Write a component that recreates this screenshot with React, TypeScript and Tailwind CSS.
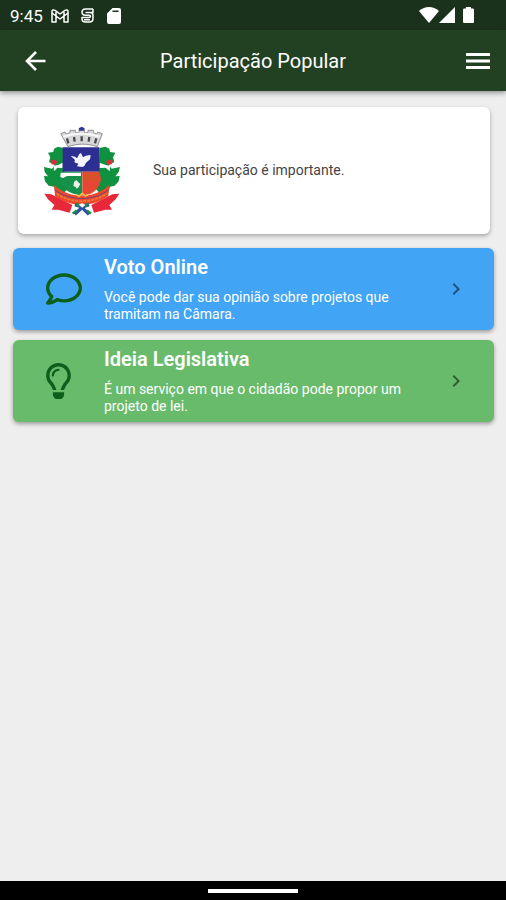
import type { ReactNode } from "react";
import { FaRegComment, FaRegLightbulb } from "react-icons/fa";
import { MdChevronRight } from "react-icons/md";

function StatusBar() {
  return (
    <div className="flex h-[30px] items-center justify-between bg-[#1a321b] pr-8 pl-[10px] text-white">
      <div className="flex items-center pt-px">
        <span className="w-[41px] text-[17px] leading-5 whitespace-nowrap">9:45</span>
        <svg className="h-[14px] w-[18px]" viewBox="0 0 18 14" fill="none" stroke="currentColor" strokeWidth="1.5" strokeLinejoin="round">
          <path d="M1 2.500C1 1 2.700.5 4 1.400L9 5l5-3.600c1.300-.9 3-.4 3 1.100V13h-4V7L9 10 5 7v6H1z" />
          <path d="M5 7V3M13 7V3M1 4l4 3M17 4l-4 3" />
        </svg>
        <svg className="ml-3 h-[15px] w-[13px]" viewBox="0 0 13 15" fill="none" stroke="currentColor" strokeWidth="1.500" strokeLinejoin="round">
          <path d="M12 1H4.500C2.200 1 1 2.200 1 4s1.200 3.200 3.500 3.200H8c1 0 1.500.4 1.500 1.100S9 9.500 8 9.500H1V11c0 2 1.500 3 3.500 3h4c2.300 0 3.500-1.500 3.500-3.500V7.200c0-1.900-1.200-2.600-3-2.600H4.500M12 1v3.600H9M3 11.800h6" />
        </svg>
        <svg className="ml-[13px] h-4 w-[14px]" viewBox="0 0 14 16" fill="currentColor">
          <path fillRule="evenodd" d="M5.500 0H12a2 2 0 0 1 2 2v12a2 2 0 0 1-2 2H2a2 2 0 0 1-2-2V5.500zM5.500 2.500v1.500h6V2.500z" />
        </svg>
      </div>
      <div className="flex items-center">
        <svg className="h-4 w-5" viewBox="0 0 20 16" fill="currentColor">
          <path d="M0 4c6-5.300 14-5.300 20 0L10 16z" />
        </svg>
        <svg className="h-4 w-4" viewBox="0 0 16 16" fill="currentColor">
          <path d="M16 0v16H0z" />
        </svg>
        <svg className="ml-2 h-4 w-[11px]" viewBox="0 0 11 16" fill="currentColor">
          <path d="M3 0h5v1.500h1.500c1 0 1.500.5 1.500 1.500v11.500c0 1-.5 1.500-1.500 1.500h-8C.5 16 0 15.500 0 14.500V3c0-1 .5-1.500 1.500-1.500H3z" />
        </svg>
      </div>
    </div>
  );
}

function CoatOfArms() {
  return (
    <svg className="h-[90px] w-[78px] shrink-0" viewBox="39 30 234 270" role="img" aria-label="Brasão do município">
      {/* branches */}
      <g fill="#10913f">
        <path d="M100 96 84 92 72 98 70 108 54 110 61 124 57 138 75 147 66 158 42 153 44 168 54 181 42 180 45 196 56 209 72 212 76 228 96 236 112 220 104 180z" />
        <path d="M208 96 226 92 238 98 240 108 256 110 249 124 253 138 236 147 245 158 270 153 266 168 256 181 269 180 266 196 254 209 240 212 235 228 214 236 198 220 206 180z" />
      </g>
      <path fill="#fff" d="M71 150 86 146 98 140V156L82 155 72 166zM240 150 225 146 209 140V156L227 155 239 166z" />
      <path fill="#db2e3a" d="M62 132 75 131 82 138 75 146 65 145zM248 132 235 131 228 138 235 146 245 145z" />
      {/* shield */}
      <path fill="#2c2f91" d="M98 94h110v73H98z" />
      <path fill="#15914b" d="M98 167h59v72c-39-4-65-23-68-54z" />
      <path fill="#e64732" d="M157 167h51l5 22c-5 30-24 48-56 50z" />
      <path fill="#f2f5ff" d="M122 119 135 122 141 127 148 114 153 111 159 124 167 119 182 117 180 130 168 140 163 150 157 153 141 151 145 143 133 139 135 132z" />
      <path fill="#fff" d="M92 170h61v10h-42l-12 6-8-3z" />
      <path fill="#e6f4e9" d="M132 198 139 192 145 199 151 204 146 213 141 218 136 212 130 210z" />
      <path fill="none" stroke="#c85d20" strokeWidth="4" d="M165 179 176 173 185 179 201 174M164 190h37M169 179v12M183 179v12M197 176v15" />
      {/* mural crown */}
      <path fill="#d8d8da" stroke="#929296" strokeWidth="3" d="M92 53 105 48 109 54 120 50V43h16v7h11V40h16v10h11v-7h16v7l10 4 3-6 14 5-15 39c-29-10-59-10-88 0z" />
      <path fill="none" stroke="#f7f7f8" strokeWidth="7" d="M99 62c37-12 73-12 110 0" />
      <path stroke="#49494d" strokeWidth="7" d="M111 67 115 82M132 63 134 77M155 61v15M178 63 176 77M199 67 195 82" />
      <path fill="#30379b" d="M146 37 155 32 164 37 161 44h-13z" />
      {/* ribbon */}
      <path fill="#e7273a" d="M43 233 64 235 127 267 119 290 84 281 65 281 73 267 54 250zM268 233 247 235 184 267 192 290 227 281 246 281 238 267 257 250z" />
      <path fill="#ed482b" d="M72 207c46 43 120 43 166 0l-3 33c-47 35-113 35-160 0z" />
      <path fill="none" stroke="#e67f35" strokeWidth="5" strokeDasharray="9 3" d="M80 233c43 30 107 30 150 0" />
      <path fill="none" stroke="#79407b" strokeWidth="3" d="M75 222c45 34 115 34 160 0" />
      <path fill="none" stroke="#ffb54c" strokeWidth="5" d="M138 235 147 241 157 232 166 240 176 235" />
      {/* knot */}
      <path fill="none" stroke="#2e519f" strokeWidth="10" d="M135 266 153 272 177 295M177 266 158 273 134 295" />
      <path fill="none" stroke="#169047" strokeWidth="7" d="M140 283 128 293M171 283 183 293M142 261v12M170 261v12" />
      <path fill="#f5f7fb" d="M146 266 156 261 166 267 157 275z" />
    </svg>
  );
}

function ActionCard({ title, text, icon, color }: { title: string; text: string; icon: ReactNode; color: string }) {
  return (
    <button type="button" className={`flex h-[82px] w-full items-center rounded-md pr-[26px] pl-[33px] text-left shadow-[0_2px_4px_rgba(0,0,0,0.35)] ${color}`}>
      <span className="w-[58px] shrink-0 text-[#0d5f1c]">{icon}</span>
      <span className="flex min-w-0 flex-1 flex-col gap-[10px] self-start pt-[7px] text-white">
        <span className="text-xl leading-6 font-semibold">{title}</span>
        <span className="max-w-[312px] text-sm leading-[17px]">{text}</span>
      </span>
      <MdChevronRight className="size-6 shrink-0 text-black/50" />
    </button>
  );
}

export default function App() {
  return (
    <div className="flex min-h-screen flex-col bg-[#eeeeee] font-['Roboto',sans-serif]">
      <StatusBar />
      <header className="grid h-[61px] grid-cols-[48px_1fr_48px] items-center bg-[#224122] px-3 text-white shadow-[0_2px_5px_rgba(0,0,0,0.4)]">
        <button type="button" aria-label="Voltar" className="flex h-12 items-center justify-center">
          <svg className="size-[22px]" viewBox="0 0 22 22" fill="none" stroke="currentColor" strokeWidth="2.600">
            <path d="M20.500 11H2.500M11 2 2 11l9 9" />
          </svg>
        </button>
        <h1 className="text-center text-xl leading-6">Participação Popular</h1>
        <button type="button" aria-label="Abrir menu" className="flex h-12 items-center justify-end pr-1">
          <svg className="h-4 w-6" viewBox="0 0 24 16" fill="currentColor">
            <path d="M0 0h24v3H0zM0 6.500h24v3H0zM0 13h24v3H0z" />
          </svg>
        </button>
      </header>
      <main className="flex flex-1 flex-col gap-[10px] pt-4 pr-3 pl-[13px]">
        <section className="mr-1 ml-[5px] mb-1 flex h-[127px] items-center gap-8 rounded-md bg-white pl-[25px] shadow-[0_2px_4px_rgba(0,0,0,0.3)]">
          <CoatOfArms />
          <p className="text-sm leading-[17px] text-[#444444]">Sua participação é importante.</p>
        </section>
        <ActionCard
          title="Voto Online"
          text="Você pode dar sua opinião sobre projetos que tramitam na Câmara."
          icon={<FaRegComment className="size-9" />}
          color="bg-[#42a4f5]"
        />
        <ActionCard
          title="Ideia Legislativa"
          text="É um serviço em que o cidadão pode propor um projeto de lei."
          icon={<FaRegLightbulb className="h-9 w-[25px]" />}
          color="bg-[#68bb6b]"
        />
      </main>
      <footer className="flex h-[19px] items-center justify-center bg-black">
        <div className="h-1 w-[90px] bg-white" />
      </footer>
    </div>
  );
}
